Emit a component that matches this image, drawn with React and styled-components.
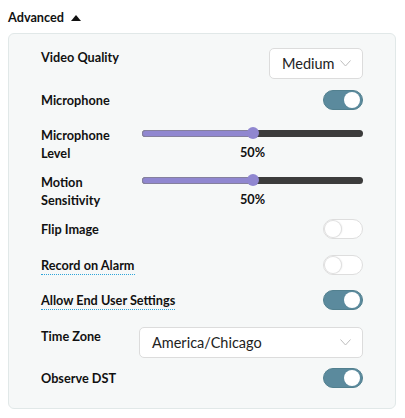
import React from "react";
import styled, { createGlobalStyle } from "styled-components";

const GlobalStyle = createGlobalStyle`
  body {
    margin: 0;
    background: #ffffff;
    font-family: Lato, "Liberation Sans", sans-serif;
    color: #111;
  }
`;

const Page = styled.div`
  width: 405px;
  box-sizing: border-box;
  padding: 8px 9px 0 8px;
`;

const Header = styled.div`
  display: flex;
  align-items: center;
  gap: 7px;
  font-size: 12.7px;
  font-weight: 700;
  line-height: 18px;
`;

const Caret = styled.span`
  width: 0;
  height: 0;
  border-left: 5.5px solid transparent;
  border-right: 5.5px solid transparent;
  border-bottom: 6px solid #111;
  margin-top: 1px;
`;

const Panel = styled.div`
  margin-top: 7px;
  border: 1px solid #e1e8e8;
  border-radius: 6px;
  background: #f6f8f8;
  padding: 14px 32px 20px 32px;
`;

const Row = styled.div`
  display: flex;
  align-items: ${(p) => (p.$align === "center" ? "center" : "flex-start")};
  justify-content: space-between;
  margin-top: ${(p) => p.$space || 0}px;
`;

const Label = styled.div`
  flex-shrink: 0;
  box-sizing: border-box;
  width: ${(p) => (p.$fixed ? "98px" : "auto")};
  padding-right: ${(p) => (p.$fixed ? "12px" : "0")};
  font-size: 12.7px;
  font-weight: 700;
  line-height: 18px;
  color: #111;
`;

const Hint = styled.span`
  border-bottom: 1px dotted #2ea5da;
  padding-bottom: 1px;
`;

const Select = styled.div`
  display: flex;
  align-items: center;
  justify-content: space-between;
  box-sizing: border-box;
  height: 31px;
  width: ${(p) => (p.$full ? "auto" : "94px")};
  flex: ${(p) => (p.$full ? "1" : "none")};
  margin-left: auto;
  padding: 0 11px 0 12px;
  border: 1px solid #dcdcdc;
  border-radius: 5px;
  background: #fff;
  font-size: 14.5px;
  color: #222;
`;

const Chevron = () => (
  <svg width="11" height="7" viewBox="0 0 11 7">
    <path d="M0.5 0.5 L5.5 6 L10.5 0.5" fill="none" stroke="#bdbdbd" strokeWidth="1" />
  </svg>
);

const SliderBox = styled.div`
  flex: 1;
  padding-left: 3px;
`;

const TrackArea = styled.div`
  position: relative;
  height: 14px;
  display: flex;
  align-items: center;
`;

const Track = styled.div`
  position: relative;
  width: 100%;
  height: 7px;
  border-radius: 4px;
  background: #3c3c3c;
  overflow: hidden;
`;

const Fill = styled.div`
  height: 100%;
  background: #9087d0;
  border-radius: 4px 0 0 4px;
  box-shadow: inset 0 0 0 1px #85809e;
`;

const Thumb = styled.div`
  position: absolute;
  top: 1px;
  width: 12px;
  height: 12px;
  margin-left: -6px;
  border-radius: 50%;
  background: #9087d0;
`;

const Value = styled.div`
  margin-top: 3px;
  text-align: center;
  font-size: 12.7px;
  font-weight: 700;
  line-height: 18px;
`;

const Switch = styled.div`
  position: relative;
  box-sizing: border-box;
  width: 40px;
  height: 20px;
  border-radius: 10px;
  border: 1px solid ${(p) => (p.$on ? "#52808f" : "#dedede")};
  background: ${(p) => (p.$on ? "#5b8a9d" : "#ffffff")};
  flex-shrink: 0;

  &::after {
    content: "";
    position: absolute;
    top: 1px;
    left: ${(p) => (p.$on ? "20px" : "1px")};
    width: 16px;
    height: 16px;
    border-radius: 50%;
    background: #fff;
    box-shadow: ${(p) => (p.$on ? "none" : "0 0 0 1px #e0e0e0, 1px 0 2px rgba(0,0,0,0.12)")};
  }
`;

const Slider = ({ value }) => (
  <SliderBox>
    <TrackArea>
      <Track>
        <Fill style={{ width: `${value}%` }} />
      </Track>
      <Thumb style={{ left: `${value}%` }} />
    </TrackArea>
    <Value>{value}%</Value>
  </SliderBox>
);

export default function App() {
  return (
    <Page>
      <GlobalStyle />
      <Header>
        Advanced <Caret />
      </Header>
      <Panel>
        <Row>
          <Label $fixed>Video Quality</Label>
          <Select>
            Medium <Chevron />
          </Select>
        </Row>
        <Row $align="center" $space={11}>
          <Label>Microphone</Label>
          <Switch $on />
        </Row>
        <Row $space={16}>
          <Label $fixed>Microphone Level</Label>
          <Slider value={50} />
        </Row>
        <Row $space={11}>
          <Label $fixed>Motion Sensitivity</Label>
          <Slider value={50} />
        </Row>
        <Row $align="center" $space={10}>
          <Label>Flip Image</Label>
          <Switch />
        </Row>
        <Row $align="center" $space={16}>
          <Label>
            <Hint>Record on Alarm</Hint>
          </Label>
          <Switch />
        </Row>
        <Row $align="center" $space={15}>
          <Label>
            <Hint>Allow End User Settings</Hint>
          </Label>
          <Switch $on />
        </Row>
        <Row $space={17}>
          <Label $fixed>Time Zone</Label>
          <Select $full>
            America/Chicago <Chevron />
          </Select>
        </Row>
        <Row $align="center" $space={10}>
          <Label>Observe DST</Label>
          <Switch $on />
        </Row>
      </Panel>
    </Page>
  );
}
